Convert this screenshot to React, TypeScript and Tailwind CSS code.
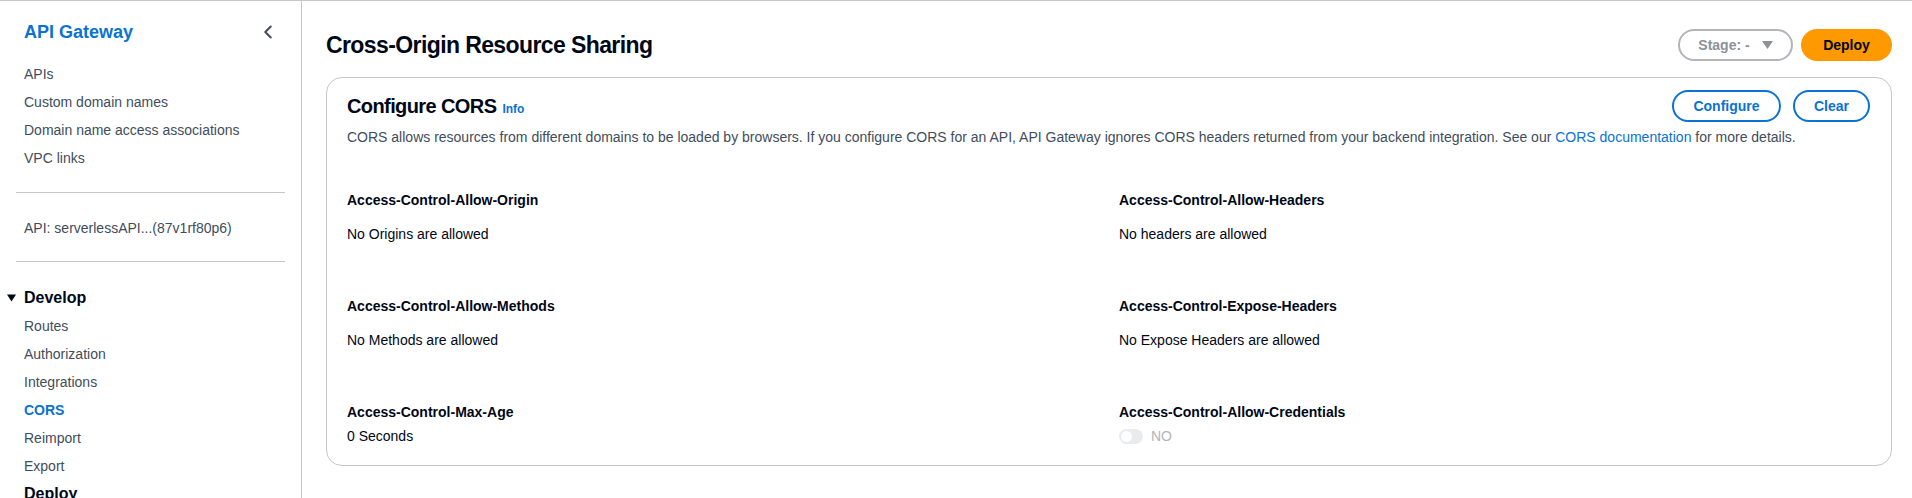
import { ChevronLeft } from "lucide-react";

const font = { fontFamily: '"Liberation Sans", Arial, sans-serif' };

const topLinks = ["APIs", "Custom domain names", "Domain name access associations", "VPC links"];
const developLinks = ["Routes", "Authorization", "Integrations", "CORS", "Reimport", "Export"];

function Sidebar() {
  return (
    <aside className="w-[302px] shrink-0 border-r border-[#c6c6cd] pt-[20px]">
      <div className="flex items-center justify-between pl-6 pr-[22px]">
        <span className="text-[18px] leading-[22px] font-bold text-[#0972d3]">API Gateway</span>
        <ChevronLeft size={22} strokeWidth={2.2} className="text-[#414d5c]" />
      </div>
      <nav className="mt-[17px]">
        {topLinks.map((l) => (
          <div key={l} className="h-[28px] flex items-center pl-6 text-[14px] text-[#414d5c]">
            {l}
          </div>
        ))}
      </nav>
      <div className="mx-4 mt-[20px] h-px bg-[#c6c6cd]" />
      <div className="mt-[21px] h-[28px] flex items-center pl-6 text-[14px] text-[#414d5c]">
        API: serverlessAPI...(87v1rf80p6)
      </div>
      <div className="mx-4 mt-[19px] h-px bg-[#c6c6cd]" />
      <div className="mt-[22px] h-[28px] flex items-center text-[16px] font-bold text-[#000716]">
        <svg width="24" height="12" viewBox="0 0 24 12" className="shrink-0">
          <path d="M7 2.5 L16 2.5 L11.5 9.5 Z" fill="#000716" />
        </svg>
        Develop
      </div>
      {developLinks.map((l) => (
        <div
          key={l}
          className={
            l === "CORS"
              ? "h-[28px] flex items-center pl-6 text-[14px] font-bold text-[#0972d3]"
              : "h-[28px] flex items-center pl-6 text-[14px] text-[#414d5c]"
          }
        >
          {l}
        </div>
      ))}
      <div className="h-[28px] flex items-center pl-6 text-[16px] font-bold text-[#000716]">Deploy</div>
    </aside>
  );
}

function Field({ label, children, tight }: { label: string; children: React.ReactNode; tight?: boolean }) {
  return (
    <div>
      <div className="h-[20px] leading-[20px] text-[14px] font-bold text-[#000716]">{label}</div>
      <div className={tight ? "mt-[4px] h-[20px] flex items-center text-[14px] text-[#000716]" : "mt-[14px] h-[20px] flex items-center text-[14px] text-[#000716]"}>
        {children}
      </div>
    </div>
  );
}

export default function App() {
  return (
    <div style={font} className="h-[498px] w-[1912px] overflow-hidden bg-white border-t border-[#c6c6cd] flex">
      <Sidebar />
      <main className="flex-1 pl-6 pr-5 pt-[28px]">
        <div className="flex items-center justify-between h-[32px]">
          <h1 className="text-[23px] leading-[30px] font-bold tracking-[-0.6px] text-[#000716]">
            Cross-Origin Resource Sharing
          </h1>
          <div className="flex items-center gap-2">
            <button className="h-[32px] w-[115px] rounded-full border-2 border-[#b4b4bb] flex items-center justify-center gap-3 text-[14px] font-bold text-[#8d9299]">
              Stage: -
              <svg width="11" height="8" viewBox="0 0 11 8">
                <path d="M0 0 L11 0 L5.5 8 Z" fill="#8d9299" />
              </svg>
            </button>
            <button className="h-[32px] w-[91px] rounded-full bg-[#ff9900] text-[14px] font-bold text-[#000716]">
              Deploy
            </button>
          </div>
        </div>

        <section className="mt-[16px] rounded-2xl border border-[#c6c6cd] px-5 pt-[12px] pb-[19px]">
          <div className="flex items-center justify-between h-[32px]">
            <div className="flex items-baseline gap-[6px]">
              <h2 className="text-[20px] leading-[24px] font-bold tracking-[-0.6px] text-[#000716]">Configure CORS</h2>
              <span className="text-[12px] font-bold text-[#0972d3]">Info</span>
            </div>
            <div className="flex items-center gap-3 pr-[1px]">
              <button className="h-[32px] w-[109px] rounded-full border-2 border-[#0972d3] text-[14px] font-bold text-[#0972d3]">
                Configure
              </button>
              <button className="h-[32px] w-[77px] rounded-full border-2 border-[#0972d3] text-[14px] font-bold text-[#0972d3]">
                Clear
              </button>
            </div>
          </div>
          <p className="mt-[5px] text-[14px] leading-[20px] text-[#414d5c]">
            CORS allows resources from different domains to be loaded by browsers. If you configure CORS for an API, API
            Gateway ignores CORS headers returned from your backend integration. See our{" "}
            <span className="text-[#0972d3]">CORS documentation</span> for more details.
          </p>

          <div className="mt-[43px] grid grid-cols-2 gap-x-5 gap-y-[52px]">
            <Field label="Access-Control-Allow-Origin">No Origins are allowed</Field>
            <Field label="Access-Control-Allow-Headers">No headers are allowed</Field>
            <Field label="Access-Control-Allow-Methods">No Methods are allowed</Field>
            <Field label="Access-Control-Expose-Headers">No Expose Headers are allowed</Field>
            <Field label="Access-Control-Max-Age" tight>
              0 Seconds
            </Field>
            <Field label="Access-Control-Allow-Credentials" tight>
              <span className="flex items-center gap-2">
                <span className="relative h-[15px] w-[24px] rounded-full bg-[#e9ebed]">
                  <span className="absolute left-[2px] top-[2px] h-[11px] w-[11px] rounded-full bg-white" />
                </span>
                <span className="text-[#b4b4bb]">NO</span>
              </span>
            </Field>
          </div>
        </section>
      </main>
    </div>
  );
}
